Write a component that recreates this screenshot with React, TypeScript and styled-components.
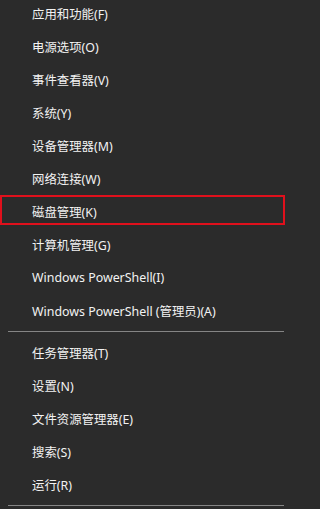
import React, { Fragment, FunctionComponent } from "react";
import styled, { createGlobalStyle } from "styled-components";

const GlobalStyle = createGlobalStyle`
  html, body {
    margin: 0;
    padding: 0;
    background: #2b2b2b;
  }
  body {
    font-family: "Noto Sans", "Noto Sans CJK SC", sans-serif;
  }
`;

const Menu = styled.div`
  width: 291px;
  height: 509px;
  overflow: hidden;
  background: #2b2b2b;
  color: #f2f2f2;
  display: flex;
  flex-direction: column;
`;

const List = styled.ul`
  list-style: none;
  margin: -3px 0 0;
  padding: 0;
  display: flex;
  flex-direction: column;
`;

const Item = styled.li<{ $marked?: boolean }>`
  position: relative;
  height: 33px;
  display: flex;
  align-items: center;
  padding-left: 32px;
  font-size: 12.4px;
  white-space: nowrap;

  ${(p) =>
    p.$marked &&
    `
    &::after {
      content: "";
      position: absolute;
      left: 0;
      right: 6px;
      top: 0;
      height: 30px;
      border: 2px solid #e0101c;
      box-sizing: border-box;
    }
  `}
`;

const Separator = styled.li`
  height: 9px;
  display: flex;
  align-items: center;
  padding: 0 7px 0 8px;

  &::before {
    content: "";
    flex: 1;
    height: 1px;
    background: #858585;
  }
`;

type Entry = { label: string; marked?: boolean } | "sep";

const entries: Entry[] = [
  { label: "应用和功能(F)" },
  { label: "电源选项(O)" },
  { label: "事件查看器(V)" },
  { label: "系统(Y)" },
  { label: "设备管理器(M)" },
  { label: "网络连接(W)" },
  { label: "磁盘管理(K)", marked: true },
  { label: "计算机管理(G)" },
  { label: "Windows PowerShell(I)" },
  { label: "Windows PowerShell (管理员)(A)" },
  "sep",
  { label: "任务管理器(T)" },
  { label: "设置(N)" },
  { label: "文件资源管理器(E)" },
  { label: "搜索(S)" },
  { label: "运行(R)" },
  "sep",
];

const App: FunctionComponent = () => (
  <Fragment>
    <GlobalStyle />
    <Menu>
      <List>
        {entries.map((e, i) =>
          e === "sep" ? (
            <Separator key={i} />
          ) : (
            <Item key={i} $marked={e.marked}>
              {e.label}
            </Item>
          )
        )}
      </List>
    </Menu>
  </Fragment>
);

export default App;
